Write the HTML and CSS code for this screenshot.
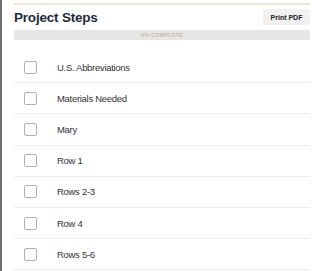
FILE: index.html
```html
<!DOCTYPE html>
<html lang="en">
<head>
<meta charset="UTF-8" />
<meta name="viewport" content="width=device-width, initial-scale=1" />
<title>Project Steps</title>
<link rel="stylesheet" href="styles.css">
</head>
<body>
  <div class="container">
    <div class="header">
      <h1>Project Steps</h1>
      <button type="button" class="print-btn">Print PDF</button>
    </div>

    <div class="progress">
      <span class="progress-label">0% COMPLETE</span>
    </div>

    <ul class="steps">
      <li class="step"><span class="check"></span><span class="step-name">U.S. Abbreviations</span></li>
      <li class="step"><span class="check"></span><span class="step-name">Materials Needed</span></li>
      <li class="step"><span class="check"></span><span class="step-name">Mary</span></li>
      <li class="step"><span class="check"></span><span class="step-name">Row 1</span></li>
      <li class="step"><span class="check"></span><span class="step-name">Rows 2-3</span></li>
      <li class="step"><span class="check"></span><span class="step-name">Row 4</span></li>
      <li class="step"><span class="check"></span><span class="step-name">Rows 5-6</span></li>
    </ul>
  </div>
</body>
</html>
```

FILE: styles.css
```css
* {
  box-sizing: border-box;
}
body {
  margin: 0;
  padding: 0;
  min-height: 100vh;
  background: #fff;
  border-left: 2px solid #6e6e6e;
  font-family: 'Liberation Sans', Arial, sans-serif;
  color: #333;
}
.container {
  margin: 3px 10px 0 12px;
  border-top: 2px solid #f1e6d4;
}
.header {
  display: flex;
  justify-content: space-between;
  align-items: center;
  margin-top: 4px;
}
h1 {
  margin: 0;
  font-size: 13.5px;
  font-weight: 700;
  color: #1f2a3a;
  letter-spacing: -0.2px;
}
.print-btn {
  height: 16px;
  width: 47px;
  padding: 0;
  border: none;
  border-radius: 3px;
  background: #f1f1f1;
  font-family: inherit;
  font-size: 7px;
  font-weight: 700;
  color: #222;
  cursor: pointer;
}
.progress {
  margin-top: 5px;
  height: 10px;
  border-radius: 2px;
  background: #e6e6e6;
  display: flex;
  justify-content: center;
  align-items: center;
}
.progress-label {
  font-size: 5.5px;
  font-weight: 700;
  color: #c9bb9d;
  letter-spacing: 0.2px;
}
.steps {
  list-style: none;
  margin: 12px 0 0 0;
  padding: 0;
}
.step {
  display: flex;
  align-items: center;
  height: 31.2px;
  padding-left: 10px;
  border-bottom: 1px solid #eeeeee;
}
.check {
  width: 13px;
  height: 13px;
  border: 1px solid #b0b0b0;
  border-radius: 2px;
  flex-shrink: 0;
}
.step-name {
  margin-left: 20px;
  font-size: 9.5px;
  color: #333;
  letter-spacing: -0.3px;
}
```
